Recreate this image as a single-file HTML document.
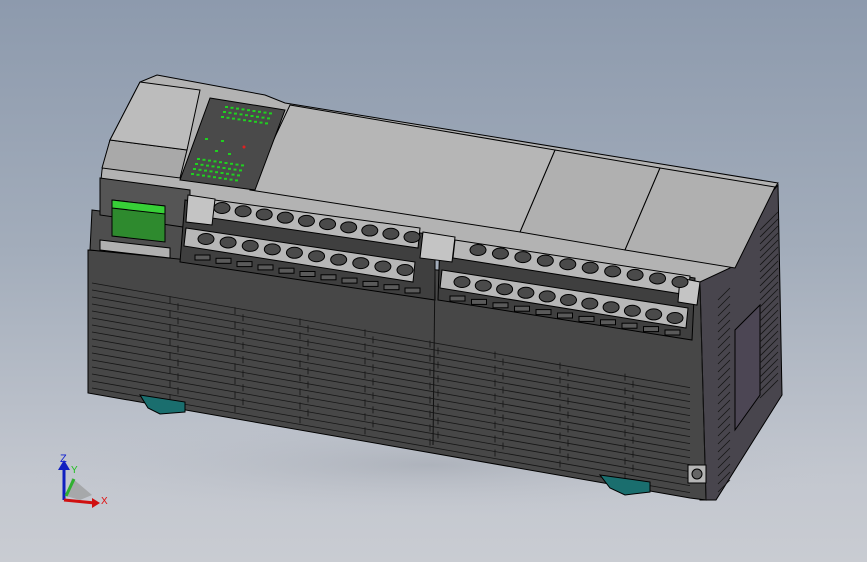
<!DOCTYPE html>
<html><head><meta charset="utf-8"><style>
html,body{margin:0;padding:0;width:867px;height:562px;overflow:hidden}
body{background:linear-gradient(180deg,#8d9aad 0%,#a3adbb 45%,#c3c7cf 85%,#c9ccd2 100%)}
svg{position:absolute;left:0;top:0}
text{font-family:"Liberation Sans",sans-serif}
</style></head><body>
<svg id="s" width="867" height="562" viewBox="0 0 867 562" stroke="#000" stroke-width="1">
<defs><radialGradient id="sh" cx="0.5" cy="0.5" r="0.5"><stop offset="0" stop-color="#8a909a" stop-opacity="0.35"/><stop offset="1" stop-color="#c3c7cf" stop-opacity="0"/></radialGradient></defs>
<ellipse cx="430" cy="465" rx="420" ry="55" fill="url(#sh)" stroke="none"/>
<!-- right side -->
<polygon points="690,285 778,185 782,395 716,500 700,500" fill="#48454d"/>
<polygon points="735,330 760,305 760,395 735,430" fill="#4c4654"/>
<!-- front face -->
<polygon points="88,250 700,285 706,500 690,498 88,393" fill="#474747"/>
<!-- top face -->
<polygon points="157,75 265,95 285,103 778,183 772,192 730,268 700,282 100,190 102,170 110,140 140,82" fill="#b3b3b3"/>
<polygon points="110,140 187,150 180,178 102,168" fill="#a9a9a9"/>
<polygon points="140,82 200,90 187,150 110,140" fill="#bcbcbc"/>
<polygon points="555,150 660,168 625,250 520,232" fill="#b0b0b0"/>
<polygon points="660,168 775,187 735,268 625,250" fill="#b0b0b0"/>
<polygon points="290,105 555,150 520,232 250,190" fill="#b6b6b6"/>
<!-- LED panel -->
<polygon points="210,98 285,110 255,190 180,180" fill="#4a4a4a"/>
<g id="leds" stroke="none" fill="#20d020"></g>
<circle cx="244" cy="147" r="1.5" fill="#e02020" stroke="none"/>
<!-- left column / connector -->
<polygon points="92,210 188,222 188,260 90,250" fill="#4e4e4e"/>
<polygon points="100,178 190,190 190,228 100,215" fill="#555"/>
<polygon points="112,200 165,206 165,242 112,236" fill="#2e8a2e"/>
<polygon points="112,200 165,206 165,214 112,208" fill="#37d037"/>
<polygon points="100,240 170,248 170,258 100,250" fill="#b0b0b0"/>
<!-- terminal blocks -->
<polygon points="185,200 435,235 435,300 180,262" fill="#3f3f3f"/>
<polygon points="440,238 695,278 692,340 438,300" fill="#3f3f3f"/>
<polygon points="200,198 420,228 418,248 198,216" fill="#b7b7b7"/>
<polygon points="186,228 415,262 413,282 184,246" fill="#b7b7b7"/>
<polygon points="455,240 690,276 688,295 453,258" fill="#b7b7b7"/>
<polygon points="442,270 688,308 686,328 440,288" fill="#b7b7b7"/>
<polygon points="188,195 215,199 212,225 186,222" fill="#c4c4c4"/>
<polygon points="423,232 455,237 452,262 420,258" fill="#c4c4c4"/>
<polygon points="680,278 700,282 697,305 678,302" fill="#c4c4c4"/>
<g id="holes" fill="#4a4a4a"></g>
<g id="vents" fill="none" stroke="#151515" stroke-width="0.8"></g>
<line x1="435" y1="270" x2="433" y2="445" stroke="#111"/>
<line x1="700" y1="285" x2="706" y2="500" stroke="#111"/>
<rect x="688" y="465" width="18" height="18" fill="#b5b5b5"/>
<circle cx="697" cy="474" r="5" fill="#666"/>
<!-- DIN clips -->
<polygon points="140,395 185,402 185,412 160,414 148,408" fill="#1a6e6e"/>
<polygon points="600,475 650,482 650,492 625,495 610,488" fill="#1a6e6e"/>
<!-- triad -->
<g stroke-width="3">
<line x1="64" y1="500" x2="64" y2="468" stroke="#1020c0"/>
<line x1="64" y1="500" x2="95" y2="503" stroke="#d01010"/>
</g>
<polygon points="58,470 64,460 70,470" fill="#1020c0" stroke="none"/>
<polygon points="92,498 100,503 92,508" fill="#d01010" stroke="none"/>
<polygon points="66,496 72,478 92,495 80,500" fill="#9a9a9a" stroke="none" opacity="0.7"/>
<line x1="66" y1="496" x2="74" y2="479" stroke="#30b030" stroke-width="3"/>
<text x="60" y="462" fill="#1020d0" font-size="11" stroke="none">Z</text>
<text x="71" y="473" fill="#20c020" font-size="10" stroke="none">Y</text>
<text x="101" y="504" fill="#e01010" font-size="10" stroke="none">X</text>
</svg>
<script>
var ns="http://www.w3.org/2000/svg";
function el(p,t,a){var e=document.createElementNS(ns,t);for(var k in a)e.setAttribute(k,a[k]);document.getElementById(p).appendChild(e);}
function row(x0,y0,x1,y1,n){for(var i=0;i<n;i++){var t=i/(n-1);el("holes","ellipse",{cx:x0+(x1-x0)*t,cy:y0+(y1-y0)*t,rx:8,ry:5.5});}}
row(222,208,412,237,10);row(206,239,405,270,10);
row(478,250,680,282,10);row(462,282,675,318,11);
for(var i=0;i<11;i++){el("holes","rect",{x:195+i*21,y:255+i*3.3,width:15,height:5,fill:"#5a5a5a"});el("holes","rect",{x:450+i*21.5,y:296+i*3.4,width:15,height:5,fill:"#5a5a5a"});}
for(var j=0;j<16;j++){var y=283+j*7;el("vents","line",{x1:92,y1:y,x2:690,y2:y+0.17*598+3});}
for(var k=0;k<8;k++){var x=170+k*65;for(var j=0;j<15;j++){var y=283+j*7+0.17*(x-92)+((j%2)?0:0);el("vents","line",{x1:x+(j%2)*8,y1:y,x2:x+(j%2)*8,y2:y+7});}}
for(var j=0;j<25;j++){el("vents","line",{x1:718,y1:300+j*8,x2:730,y2:288+j*8});el("vents","line",{x1:760,y1:230+j*7,x2:778,y2:212+j*7});}
for(var r=0;r<3;r++)for(var c=0;c<9;c++)el("leds","rect",{x:225+c*5.5-r*2,y:106+r*5+c*0.8,width:3,height:2});
for(var r=0;r<4;r++)for(var c=0;c<9;c++)el("leds","rect",{x:197+c*5.5-r*2,y:158+r*5+c*0.8,width:3,height:2});
el("leds","rect",{x:205,y:138,width:3,height:2});el("leds","rect",{x:221,y:140,width:3,height:2});el("leds","rect",{x:215,y:150,width:3,height:2});el("leds","rect",{x:228,y:153,width:3,height:2});
</script>
</body></html>
